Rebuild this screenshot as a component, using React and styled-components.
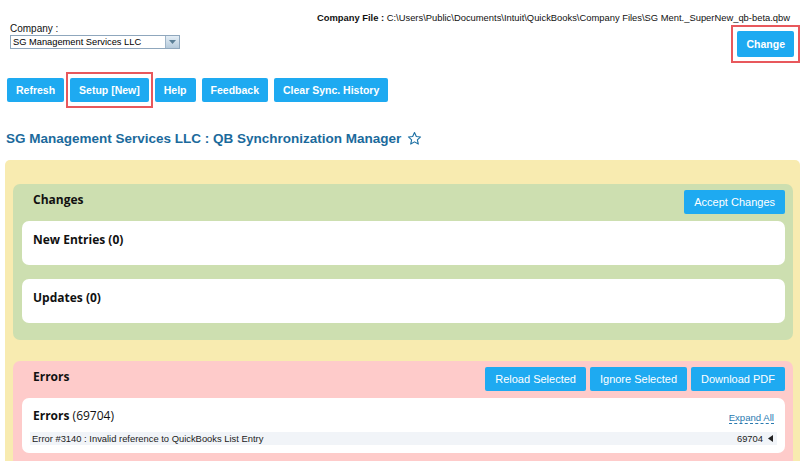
import React from "react";
import styled, { createGlobalStyle } from "styled-components";

const GlobalStyle = createGlobalStyle`
  html, body {
    margin: 0;
    padding: 0;
    background: #fff;
    font-family: "Liberation Sans", Arial, sans-serif;
    overflow: hidden;
  }
`;

export default function App() {
  return (
    <Page>
      <GlobalStyle />
      <TopBar>
        <CompanyPick>
          <Label>Company :</Label>
          <SelectBox>
            <span>SG Management Services LLC</span>
            <SelectArrow>
              <svg width="7" height="4" viewBox="0 0 7 4">
                <path d="M0 0h7L3.5 4z" fill="#5b7f97" />
              </svg>
            </SelectArrow>
          </SelectBox>
        </CompanyPick>
        <FileSide>
          <FileLine>
            <b>Company File :</b> C:\Users\Public\Documents\Intuit\QuickBooks\Company Files\SG Ment._SuperNew_qb-beta.qbw
          </FileLine>
          <Outlined $wide>
            <Button $tall>Change</Button>
          </Outlined>
        </FileSide>
      </TopBar>

      <Toolbar>
        <Button>Refresh</Button>
        <Outlined>
          <Button>Setup [New]</Button>
        </Outlined>
        <Button>Help</Button>
        <Button>Feedback</Button>
        <Button>Clear Sync. History</Button>
      </Toolbar>

      <Title>
        SG Management Services LLC : QB Synchronization Manager
        <svg width="15" height="15" viewBox="0 0 24 24">
          <path
            d="M12 2.5l2.9 6.3 6.8.7-5.1 4.6 1.5 6.8L12 17.4l-6.1 3.5 1.5-6.8-5.1-4.6 6.8-.7z"
            fill="none"
            stroke="#1b6fa3"
            strokeWidth="1.8"
            strokeLinejoin="round"
          />
        </svg>
      </Title>

      <Outer>
        <Panel $tone="green">
          <PanelHead>
            <PanelTitle>Changes</PanelTitle>
            <Button $small>Accept Changes</Button>
          </PanelHead>
          <Card>
            <CardTitle>New Entries (0)</CardTitle>
          </Card>
          <Card>
            <CardTitle>Updates (0)</CardTitle>
          </Card>
        </Panel>

        <Panel $tone="red">
          <PanelHead>
            <PanelTitle>Errors</PanelTitle>
            <Actions>
              <Button $small>Reload Selected</Button>
              <Button $small>Ignore Selected</Button>
              <Button $small>Download PDF</Button>
            </Actions>
          </PanelHead>
          <Card $short>
            <CardHead>
              <CardTitle>
                Errors <Count>(69704)</Count>
              </CardTitle>
              <ExpandLink>Expand All</ExpandLink>
            </CardHead>
            <ErrorRow>
              <span>Error #3140 : Invalid reference to QuickBooks List Entry</span>
              <RowRight>
                69704
                <svg width="5" height="7" viewBox="0 0 5 7">
                  <path d="M5 0v7L0 3.5z" fill="#222" />
                </svg>
              </RowRight>
            </ErrorRow>
          </Card>
        </Panel>
      </Outer>
    </Page>
  );
}

const Page = styled.div`
  width: 802px;
  height: 461px;
  overflow: hidden;
  padding: 11px 5px 0 5px;
  box-sizing: border-box;
`;

const TopBar = styled.div`
  display: flex;
  justify-content: space-between;
  align-items: flex-start;
`;

const CompanyPick = styled.div`
  padding-top: 12px;
  padding-left: 5px;
`;

const Label = styled.div`
  font-size: 10px;
  color: #111;
  line-height: 12px;
`;

const SelectBox = styled.div`
  width: 170px;
  height: 14px;
  box-sizing: border-box;
  border: 1px solid #8fa7bd;
  display: flex;
  align-items: center;
  justify-content: space-between;
  font-size: 9.3px;
  color: #000;
  padding-left: 2px;
  background: #fff;
`;

const SelectArrow = styled.span`
  width: 13px;
  height: 12px;
  background: linear-gradient(#e4eef6, #b5cadb);
  border-left: 1px solid #9fb5c8;
  display: flex;
  align-items: center;
  justify-content: center;
`;

const FileSide = styled.div`
  display: flex;
  flex-direction: column;
  align-items: flex-end;
  gap: 7px;
  padding-right: 3px;
`;

const FileLine = styled.div`
  font-size: 9.4px;
  color: #111;
  line-height: 13px;
  margin-right: 4px;
  b {
    font-weight: bold;
  }
`;

const Outlined = styled.div`
  border: 2px solid #e8585c;
  padding: 4px ${(p) => (p.$wide ? "4px" : "2px")};
  display: inline-flex;
  margin: -6px ${(p) => (p.$wide ? "-6px" : "-4px")};
`;

const Button = styled.button`
  background: #1eaaf1;
  color: #fff;
  border: none;
  border-radius: 2px;
  font-family: "Liberation Sans", Arial, sans-serif;
  font-size: ${(p) => (p.$small ? "11px" : "10.5px")};
  font-weight: ${(p) => (p.$small ? "normal" : "bold")};
  height: ${(p) => (p.$tall ? "26px" : "24px")};
  padding: 0 ${(p) => (p.$small ? "10px" : "9px")};
  cursor: pointer;
  white-space: nowrap;
`;

const Toolbar = styled.div`
  display: flex;
  gap: 6px;
  margin-top: 21px;
  padding-left: 2px;
  align-items: center;
`;

const Title = styled.h2`
  margin: 29px 0 0 1px;
  font-size: 13.5px;
  font-weight: bold;
  color: #1b6a9c;
  display: flex;
  align-items: center;
  gap: 6px;
`;

const Outer = styled.div`
  margin-top: 14px;
  background: #f8ebb0;
  border-radius: 5px;
  margin-right: -3px;
  padding: 24px 7px 10px 8px;
  display: flex;
  flex-direction: column;
  gap: 21px;
`;

const Panel = styled.div`
  background: ${(p) => (p.$tone === "green" ? "#cddfb0" : "#fecbca")};
  border-radius: 7px;
  padding: 6px 8px 17px 9px;
  display: flex;
  flex-direction: column;
  gap: 14px;
`;

const PanelHead = styled.div`
  display: flex;
  justify-content: space-between;
  align-items: flex-start;
  padding-left: 11px;
  margin-bottom: -7px;
`;

const PanelTitle = styled.div`
  font-family: "Open Sans", "Segoe UI", sans-serif;
  font-weight: bold;
  font-size: 12px;
  color: #111;
  padding-top: 1px;
`;

const Actions = styled.div`
  display: flex;
  gap: 4px;
`;

const Card = styled.div`
  background: #fff;
  border-radius: 7px;
  min-height: ${(p) => (p.$short ? "auto" : "44px")};
  padding: ${(p) => (p.$short ? "9px" : "10px")} 8px 8px 11px;
  box-sizing: border-box;
`;

const CardTitle = styled.div`
  font-family: "Open Sans", "Segoe UI", sans-serif;
  font-weight: bold;
  font-size: 12px;
  color: #111;
`;

const Count = styled.span`
  font-weight: normal;
`;

const CardHead = styled.div`
  display: flex;
  justify-content: space-between;
  align-items: flex-end;
  padding-right: 3px;
`;

const ExpandLink = styled.a`
  font-size: 9.6px;
  color: #2a7ab0;
  border-bottom: 1px dashed #2a7ab0;
  line-height: 11px;
  margin-bottom: 0;
`;

const ErrorRow = styled.div`
  margin: 8px 0 0 -3px;
  background: #f1f4f8;
  display: flex;
  justify-content: space-between;
  align-items: center;
  font-size: 9.4px;
  color: #222;
  height: 13px;
  padding: 0 4px 0 2px;
`;

const RowRight = styled.span`
  display: flex;
  align-items: center;
  gap: 5px;
`;
